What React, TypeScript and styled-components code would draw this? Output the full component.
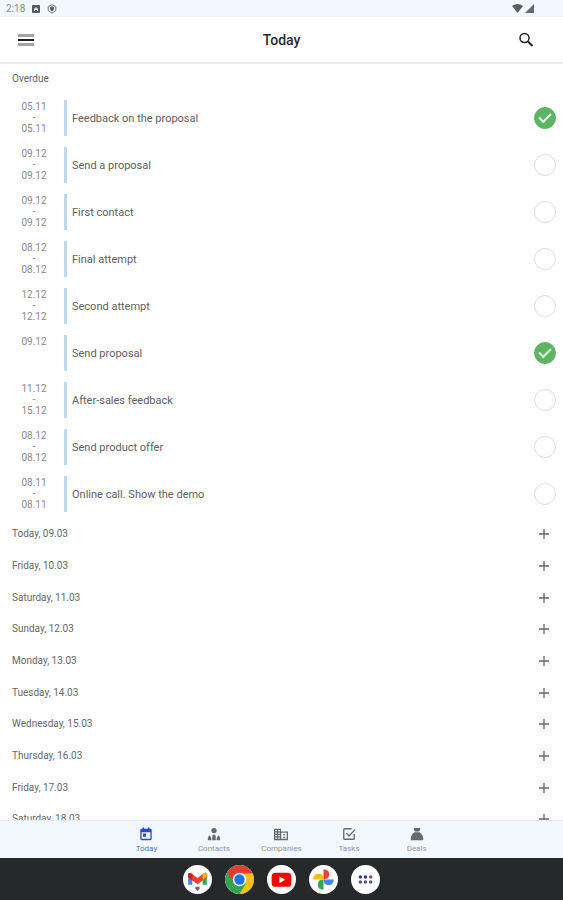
import React, { useState } from "react";
import styled, { createGlobalStyle } from "styled-components";

const GlobalStyle = createGlobalStyle`
  * { box-sizing: border-box; }
  body { margin: 0; background: #fff; font-family: Roboto, "Liberation Sans", sans-serif; }
  button { font: inherit; border: 0; padding: 0; background: none; cursor: pointer; }
`;

const Screen = styled.div`
  display: flex;
  flex-direction: column;
  height: 100vh;
  overflow: hidden;
  color: #666;
`;

const StatusBar = styled.div`
  flex: none;
  display: flex;
  align-items: center;
  gap: 7px;
  height: 17px;
  padding: 0 29px 0 6px;
  background: #f2f6fe;
  color: #8a8d92;
  font-size: 10px;
  line-height: 16px;
`;

const StatusGroup = styled.div`
  display: flex;
  align-items: center;
  gap: 2px;
  margin-left: auto;
`;

const Header = styled.header`
  flex: none;
  display: grid;
  grid-template-columns: 40px 1fr 40px;
  align-items: center;
  height: 47px;
  padding: 0 17px 0 6px;
  border-bottom: 2px solid #ececee;
`;

const Title = styled.h1`
  margin: 0;
  padding: 1px 0 0 11px;
  color: #2a2a2a;
  font-size: 14px;
  line-height: 20px;
  font-weight: 500;
  text-align: center;
`;

const IconButton = styled.button`
  display: grid;
  place-items: center;
  height: 40px;
  color: #222;
`;

const Content = styled.main`
  flex: 1;
  min-height: 0;
  overflow-y: auto;
  scrollbar-width: none;
`;

const SectionTitle = styled.h2`
  margin: 0;
  font-size: 10px;
  line-height: 12px;
  font-weight: 400;
  color: #666;
`;

const OverdueHeader = styled.div`
  height: 31px;
  padding: 9px 12px;
`;

const List = styled.ul`
  margin: 0;
  padding: 0;
  list-style: none;
`;

const TaskRow = styled.li`
  display: grid;
  grid-template-columns: 52px 4px 1fr 22px;
  align-items: center;
  height: 47px;
  padding: 0 7px 1px 12px;
`;

const Dates = styled.div`
  display: flex;
  flex-direction: column;
  align-self: start;
  width: 44px;
  padding-top: 6px;
  color: #8a8a8a;
  font-size: 10px;
  line-height: 11px;
  text-align: center;
`;

const Bar = styled.div`
  width: 3px;
  height: 36px;
  background: #bfd9ea;
`;

const TaskLabel = styled.label`
  padding: 2px 0 0 4px;
  font-size: 11px;
  line-height: 16px;
  color: #606060;
`;

const Check = styled.input`
  appearance: none;
  display: grid;
  place-items: center;
  width: 22px;
  height: 22px;
  margin: 0;
  border: 1px solid #d3def0;
  border-radius: 50%;
  background: #fff;
  cursor: pointer;

  &:checked {
    border-color: #5bb563;
    background: #5bb563;
  }

  &:checked::after {
    content: "";
    width: 10px;
    height: 5px;
    margin-bottom: 3px;
    border: solid #e9f7e3;
    border-width: 0 0 2px 2px;
    transform: rotate(-45deg);
  }
`;

const DayRow = styled.li`
  display: flex;
  align-items: center;
  justify-content: space-between;
  height: 32px;
  padding: 0 13px 0 12px;

  &:nth-child(3n) {
    height: 31px;
  }
`;

const AddButton = styled.button`
  display: grid;
  place-items: center;
  width: 12px;
  height: 24px;
  color: #666;
`;

const TabBar = styled.nav`
  flex: none;
  display: flex;
  justify-content: center;
  height: 38px;
  border-top: 1px solid #e9ecf2;
  background: #f3f7fe;
`;

const Tab = styled.a<{ $active?: boolean }>`
  display: flex;
  flex-direction: column;
  align-items: center;
  gap: 2px;
  flex: 0 1 12%;
  padding-top: 6px;
  color: ${(p) => (p.$active ? "#2b4cc0" : "#66696e")};
  text-decoration: none;
`;

const TabLabel = styled.span<{ $active?: boolean }>`
  color: ${(p) => (p.$active ? "#5873cf" : "#93969c")};
  font-size: 8px;
  line-height: 12px;
`;

const Dock = styled.footer`
  flex: none;
  display: flex;
  align-items: center;
  justify-content: center;
  gap: 13px;
  height: 42px;
  background: #272829;
`;

const AppButton = styled.button`
  display: grid;
  place-items: center;
  width: 29px;
  height: 29px;
  border-radius: 50%;
  background: #fff;
  overflow: hidden;
`;

type Task = { from: string; to?: string; title: string; done?: boolean };

const initialTasks: Task[] = [
  { from: "05.11", to: "05.11", title: "Feedback on the proposal", done: true },
  { from: "09.12", to: "09.12", title: "Send a proposal" },
  { from: "09.12", to: "09.12", title: "First contact" },
  { from: "08.12", to: "08.12", title: "Final attempt" },
  { from: "12.12", to: "12.12", title: "Second attempt" },
  { from: "09.12", title: "Send proposal", done: true },
  { from: "11.12", to: "15.12", title: "After-sales feedback" },
  { from: "08.12", to: "08.12", title: "Send product offer" },
  { from: "08.11", to: "08.11", title: "Online call. Show the demo" },
];

const days = [
  "Today, 09.03",
  "Friday, 10.03",
  "Saturday, 11.03",
  "Sunday, 12.03",
  "Monday, 13.03",
  "Tuesday, 14.03",
  "Wednesday, 15.03",
  "Thursday, 16.03",
  "Friday, 17.03",
  "Saturday, 18.03",
];

const tabs = [
  {
    name: "Today",
    icon: (
      <path fillRule="evenodd" d="M3 2h1V0.500h2V2h4V.5h2V2h1q1.500 0 1.500 1.500v10Q14.500 15 13 15H3q-1.500 0-1.500-1.500v-10Q1.500 2 3 2ZM3 6v7.500h10V6ZM4.500 7.500h3.500V11H4.500Z" />
    ),
  },
  {
    name: "Contacts",
    icon: (
      <>
        <circle cx="8" cy="4" r="3" />
        <path d="M6 15V11q0-2.500 2-2.500t2 2.500v4ZM1 15v-2l1-3h1.500l1.500 3v2ZM11 15v-2l1.500-3H14l1 3v2Z" />
      </>
    ),
  },
  {
    name: "Companies",
    icon: (
      <path fillRule="evenodd" d="M0 2h8v3h8v10H0ZM1.500 3.500v1.300h2V3.500ZM4.800 3.500v1.300h2V3.500ZM1.500 6.300v1.400h2V6.300ZM4.800 6.300v1.400h2V6.300ZM1.500 9.200v1.400h2V9.200ZM4.800 9.200v1.400h2V9.200ZM1.500 12v1.400h2V12ZM4.800 12v1.400h2V12ZM8.300 6.500v7h6.200v-7ZM10.500 8h2.200v1.500h-2.200ZM10.500 11h2.200v1.500h-2.200Z" />
    ),
  },
  {
    name: "Tasks",
    icon: (
      <path d="M11 2H3q-1 0-1 1v10q0 1 1 1h10q1 0 1-1V8M5 7l3 3.200L15 3" fill="none" stroke="currentColor" strokeWidth="1.500" />
    ),
  },
  {
    name: "Deals",
    icon: (
      <path d="M4.500 1h7v2l-1 2.200h-5L4.500 3ZM5 6h6q2.500 1.500 3.800 5 .6 2 .2 4H1q-.4-2 .2-4Q2.500 7.500 5 6Z" />
    ),
  },
];

const dockApps = [
  {
    name: "Gmail",
    icon: (
      <>
        <path d="M5 10v9h4v-7Z" fill="#4285f4" />
        <path d="M19 12v7h4v-9Z" fill="#34a853" />
        <path d="M5 9.500q0-3 3-1.500l6 4.500L20 8q3-1.500 3 1.500V12l-9 6.500L5 12Z" fill="#ea4335" />
        <path d="M19 9v5l4-3V9.500Q23 6 19 9Z" fill="#fbbc04" />
        <path d="M5 9.500V12l4 3V9Q5 6 5 9.500Z" fill="#c5221f" />
        <path d="M12 21h4v2l-2 2-2-2Z" fill="#63666b" />
      </>
    ),
  },
  {
    name: "Chrome",
    icon: (
      <>
        <circle cx="14" cy="14" r="14" fill="#34a353" />
        <path d="M14 8h12.600A14 14 0 0 1 14 28l6-10Z" fill="#fbc116" />
        <path d="M2 7A14 14 0 0 1 26.600 8H14L8.500 17Z" fill="#e33b2e" />
        <circle cx="14" cy="14" r="6.500" fill="#fff" />
        <circle cx="14" cy="14" r="5" fill="#1a73e8" />
      </>
    ),
  },
  {
    name: "YouTube",
    icon: (
      <>
        <rect x="4.500" y="7.500" width="19" height="13.500" rx="3.500" fill="#f00" />
        <path d="m12 11 5.500 3.200L12 17.500Z" fill="#fff" />
      </>
    ),
  },
  {
    name: "Photos",
    icon: (
      <>
        <path d="M14 4q5.500.5 5.500 5 0 5-5.500 5Z" fill="#ea4335" />
        <path d="M24 14q-.5 5.500-5 5.500-5 0-5-5.500Z" fill="#4285f4" />
        <path d="M14 24q-5.500-.5-5.500-5 0-5 5.500-5Z" fill="#34a853" />
        <path d="M4 14q.5-5.500 5-5.500 5 0 5 5.500Z" fill="#fbbc04" />
      </>
    ),
  },
  {
    name: "All apps",
    icon: (
      <>
        {[9, 14, 19].map((x) => (
          <React.Fragment key={x}>
            <circle cx={x} cy="11.500" r="1.700" fill={x === 19 ? "#8a4a78" : "#30348c"} />
            <circle cx={x} cy="16.500" r="1.700" fill="#565a78" />
          </React.Fragment>
        ))}
      </>
    ),
  },
];

export default function App() {
  const [tasks, setTasks] = useState(initialTasks);
  const toggle = (index: number) =>
    setTasks(tasks.map((t, i) => (i === index ? { ...t, done: !t.done } : t)));

  return (
    <Screen>
      <GlobalStyle />
      <StatusBar>
        <span>2:18</span>
        <svg width="8" height="8" viewBox="0 0 8 8" aria-hidden="true">
          <rect width="8" height="8" rx="1" fill="#55585d" />
          <path d="M2 6V4l2-2 2 2v2H5V5H3v1Z" fill="#e5e9f1" />
        </svg>
        <svg width="10" height="10" viewBox="0 0 10 10" aria-hidden="true">
          <path d="M5 .7 8.800 2.500v4L5 9.300 1.200 6.500v-4Z" fill="none" stroke="#707378" />
          <path d="M5 2.500a2 2 0 0 1 2 2Q7 6 5 7.500 3 6 3 4.500a2 2 0 0 1 2-2Z" fill="#505358" />
        </svg>
        <StatusGroup>
          <svg width="11" height="9" viewBox="0 0 11 9" aria-hidden="true">
            <path d="M0 2q5.500-4 11 0L5.500 9Z" fill="#5b5e63" />
          </svg>
          <svg width="9" height="9" viewBox="0 0 9 9" aria-hidden="true">
            <path d="M9 0v9H0Z" fill="#66696e" />
          </svg>
        </StatusGroup>
      </StatusBar>

      <Header>
        <IconButton type="button" aria-label="Menu">
          <svg width="16" height="12" viewBox="0 0 16 12" aria-hidden="true">
            <path d="M0 1.500h16M0 10.500h16" stroke="#a3a3a3" strokeWidth="3" />
            <path d="M0 6h16" stroke="#222" strokeWidth="2" />
          </svg>
        </IconButton>
        <Title>Today</Title>
        <IconButton type="button" aria-label="Search">
          <svg width="16" height="16" viewBox="0 0 16 16" fill="none" stroke="currentColor" aria-hidden="true">
            <circle cx="6.500" cy="6" r="4.500" strokeWidth="1.500" />
            <path d="m10 9.500 4.500 4.500" strokeWidth="2" />
          </svg>
        </IconButton>
      </Header>

      <Content>
        <OverdueHeader>
          <SectionTitle>Overdue</SectionTitle>
        </OverdueHeader>
        <List>
          {tasks.map((task, i) => (
            <TaskRow key={i}>
              <Dates>
                <span>{task.from}</span>
                {task.to && <span>-</span>}
                {task.to && <span>{task.to}</span>}
              </Dates>
              <Bar />
              <TaskLabel htmlFor={`task-${i}`}>{task.title}</TaskLabel>
              <Check id={`task-${i}`} type="checkbox" checked={!!task.done} onChange={() => toggle(i)} />
            </TaskRow>
          ))}
        </List>
        <List>
          {days.map((day) => (
            <DayRow key={day}>
              <SectionTitle>{day}</SectionTitle>
              <AddButton type="button" aria-label={`Add task, ${day}`}>
                <svg width="12" height="12" viewBox="0 0 12 12" aria-hidden="true">
                  <path d="M6 1v10M1 6h10" stroke="currentColor" strokeWidth="1.300" />
                </svg>
              </AddButton>
            </DayRow>
          ))}
        </List>
      </Content>

      <TabBar>
        {tabs.map((tab, i) => (
          <Tab key={tab.name} href={`#${tab.name.toLowerCase()}`} $active={i === 0}>
            <svg width="14" height="14" viewBox="0 0 16 16" fill="currentColor" aria-hidden="true">
              {tab.icon}
            </svg>
            <TabLabel $active={i === 0}>{tab.name}</TabLabel>
          </Tab>
        ))}
      </TabBar>

      <Dock>
        {dockApps.map((app) => (
          <AppButton key={app.name} type="button" aria-label={app.name}>
            <svg width="29" height="29" viewBox="0 0 28 28" aria-hidden="true">
              {app.icon}
            </svg>
          </AppButton>
        ))}
      </Dock>
    </Screen>
  );
}
